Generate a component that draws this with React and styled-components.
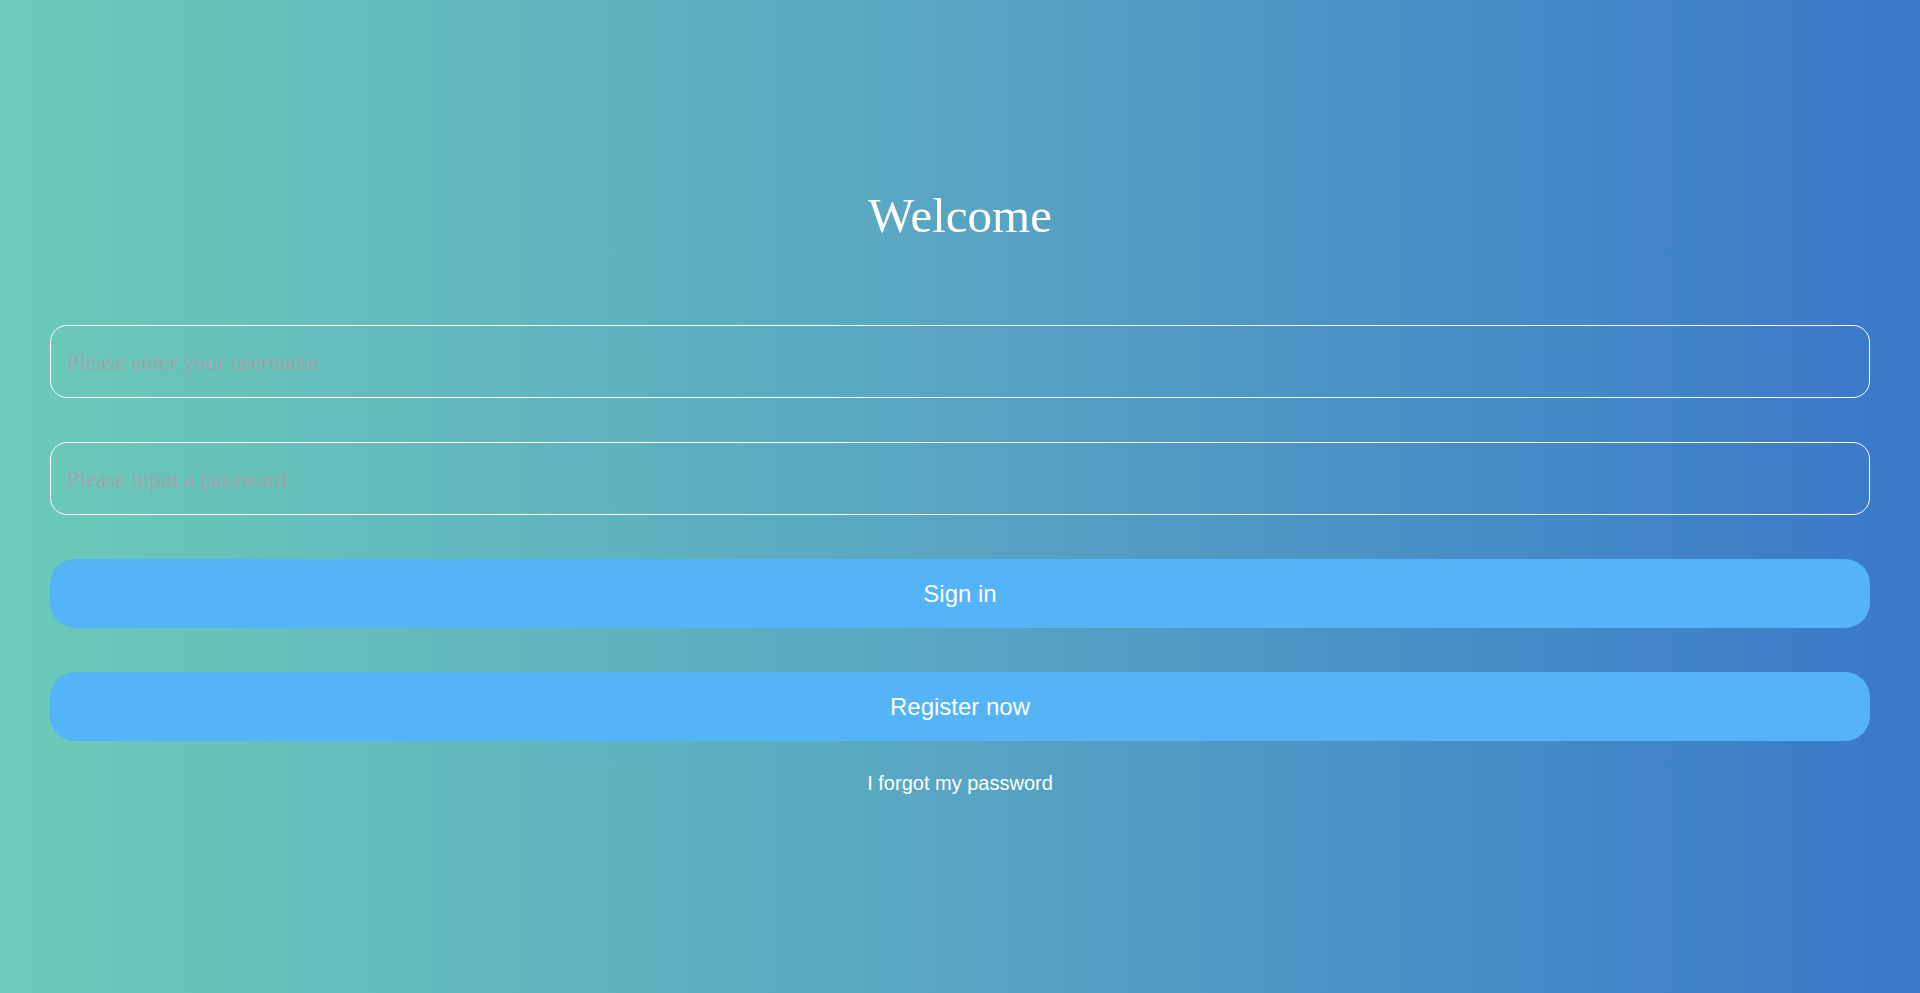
import React from 'react';
import styled, { createGlobalStyle } from 'styled-components';

const GlobalStyle = createGlobalStyle`
  html, body {
    margin: 0;
    padding: 0;
  }
  body {
    font-family: "Liberation Sans", Arial, sans-serif;
  }
  * {
    box-sizing: border-box;
  }
`;

const Page = styled.div`
  min-height: 100vh;
  background: linear-gradient(to right, #6ccbb8 0%, #5aa9c2 45%, #3a78c9 100%);
  display: flex;
  flex-direction: column;
  align-items: stretch;
  padding: 188px 50px 0;
`;

const Title = styled.h1`
  margin: 0;
  font-family: "Liberation Serif", "Times New Roman", serif;
  font-size: 49px;
  font-weight: 400;
  line-height: 56px;
  color: #fff;
  text-align: center;
`;

const Form = styled.form`
  display: flex;
  flex-direction: column;
  gap: 44px;
  margin-top: 81px;
`;

const Input = styled.input`
  height: 73px;
  width: 100%;
  padding: 2px 16px 0;
  border: 1px solid #fff;
  border-radius: 17px;
  background: transparent;
  font-family: "Liberation Serif", "Times New Roman", serif;
  font-size: 23px;
  color: #fff;
  outline: none;

  &::placeholder {
    color: #9ea6ad;
    opacity: 1;
  }
`;

const Button = styled.button`
  height: 69px;
  width: 100%;
  border: none;
  border-radius: 25px;
  background: #55b3f8;
  color: #fff;
  font-family: "Liberation Sans", Arial, sans-serif;
  font-size: 24px;
  cursor: pointer;
`;

const Forgot = styled.a`
  display: block;
  margin-top: 31px;
  text-align: center;
  font-family: "Liberation Sans", Arial, sans-serif;
  font-size: 20px;
  line-height: 23px;
  color: #fff;
  text-decoration: none;
  cursor: pointer;
`;

export default function App() {
  return (
    <>
      <GlobalStyle />
      <Page>
        <Title>Welcome</Title>
        <Form onSubmit={(e) => e.preventDefault()}>
          <Input type="text" placeholder="Please enter your username" />
          <Input type="password" placeholder="Please input a password" />
          <Button type="submit">Sign in</Button>
          <Button type="button">Register now</Button>
        </Form>
        <Forgot>I forgot my password</Forgot>
      </Page>
    </>
  );
}
